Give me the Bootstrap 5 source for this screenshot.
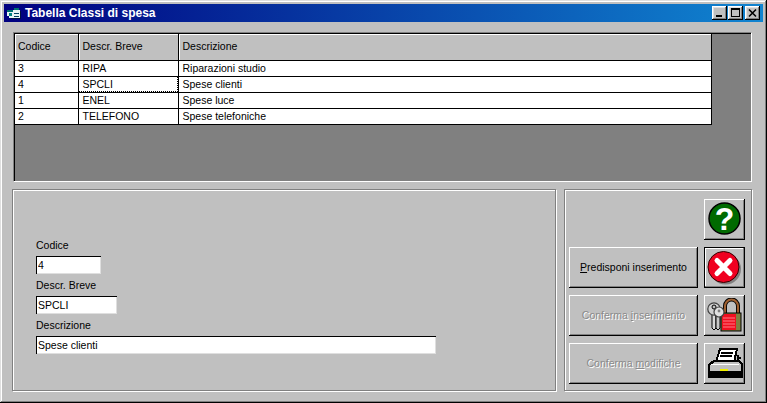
<!DOCTYPE html>
<html lang="it">
<head>
<meta charset="utf-8">
<title>Tabella Classi di spesa</title>
<link href="https://cdn.jsdelivr.net/npm/bootstrap@5.3.0/dist/css/bootstrap.min.css" rel="stylesheet">
<style>
html,body{margin:0;height:403px;overflow:hidden;background:#c0c0c0;}
body{font:10.5px/1.2 "Liberation Sans",Arial,sans-serif;color:#000;}
.win-frame{width:767px;height:403px;padding:4px;background:#c0c0c0;
 box-shadow:inset -1px -1px #000,inset 1px 1px #dfdfdf,inset -2px -2px #808080,inset 2px 2px #fff;}
.win-title{height:18px;padding:0 3px 0 2px;background:linear-gradient(90deg,#000080,#1084d0);color:#fff;}
.win-title-text{font:bold 12px "Liberation Sans",Arial,sans-serif;margin-left:3px;}
.win-ctl{width:15px;height:14px;padding:0;background:#c0c0c0;border:0;border-radius:0;display:block;
 box-shadow:inset -1px -1px #000,inset 1px 1px #fff,inset -2px -2px #808080,inset 2px 2px #dfdfdf;}
.win-ctl svg{display:block;}
.ctl-gap1{margin-left:1px;}
.ctl-gap2{margin-left:2px;}
.win-body{padding:10px 11px 0 8px;}
.grid-panel{height:150px;margin-left:1px;background:#808080;border:1px solid #808080;border-right-color:#fff;border-bottom-color:#fff;
 box-shadow:inset 1px 1px #000;padding:1px 0 0 1px;}
.data-table{width:696px;margin:0;table-layout:fixed;border-collapse:collapse;background:#fff;border-bottom:1px solid #000;--bs-table-bg:transparent;}
.data-table>:not(caption)>*>*{padding:0 0 0 4px;border:0;font-size:10.5px;line-height:15px;color:#000;box-shadow:none;white-space:nowrap;overflow:hidden;}
.data-table>:not(caption)>*>*:first-child{padding-left:3px;}
.data-table thead th{height:26px;background:#c0c0c0;font-weight:400;vertical-align:middle;border-right:1px solid #000;border-bottom:1px solid #000;box-shadow:inset 1px 1px #fff;}
.data-table tbody td{height:16px;border-right:1px solid #000;border-bottom:1px solid #000;}
.data-table tbody tr:last-child td{border-bottom:0;}
.cell-focus{outline:1px dotted #000;outline-offset:-1px;}
.bottom-row{height:202px;margin-top:7px;gap:8px;}
.etched{border:1px solid #808080;box-shadow:inset 1px 1px #fff,1px 1px #fff;background:#c0c0c0;}
.form-panel{width:544px;padding:48px 0 0 23px;}
.field{margin-bottom:4px;}
.field-label{display:block;height:18px;line-height:14px;margin:0;font-size:10.5px;}
.field-input{display:block;height:18px;padding:0 0 0 2px;font:10.5px/14px "Liberation Sans",Arial,sans-serif;color:#000;background:#fff;border:0;border-radius:0;
 box-shadow:inset 1px 1px #000,inset -1px -1px #dfdfdf;}
.w-code{width:65px;}.w-short{width:81px;}.w-desc{width:400px;}
.action-panel{width:188px;padding:9px 0 0 4px;}
.action-grid{display:grid;grid-template-columns:129px 41px;grid-auto-rows:41px;column-gap:6px;row-gap:7px;}
.bevel-btn{padding:0;border:0;border-radius:0;background:#c0c0c0;color:#000;font-size:10.5px;line-height:14px;
 box-shadow:inset -1px -1px #000,inset 1px 1px #fff,inset -2px -2px #808080;display:flex;align-items:center;justify-content:center;}
.bevel-btn span{padding-bottom:2px;}
.bevel-btn:disabled{opacity:1;background:#c0c0c0;color:#8a8a8a;text-shadow:1px 1px 0 #fff;border:0;}
.bevel-btn.is-default{box-shadow:inset 0 0 0 1px #000,inset -2px -2px #808080,inset 2px 2px #fff;}
.slot{grid-column:2;}
.bevel-btn u{text-underline-offset:1px;}
</style>
</head>
<body>
<div class="win-frame d-flex flex-column">
  <div class="win-title d-flex align-items-center flex-shrink-0">
    <svg width="16" height="14" viewBox="0 0 16 14" aria-hidden="true" shape-rendering="crispEdges">
      <path d="M1 4h7V2h5v2h1v8H3v-2H1z" fill="#e8f4f4"/>
      <path d="M1 4h6v2H1zM8 2h5v2H8z" fill="#006f70"/>
      <rect x="3" y="7" width="3" height="3" fill="#008080"/>
      <path d="M8 7h5v1H8zM8 10h5v1H8z" fill="#004060"/>
      <path d="M14 5h1v8H5v-1h9z" fill="#001040"/>
    </svg>
    <span class="win-title-text flex-grow-1">Tabella Classi di spesa</span>
    <button class="btn win-ctl" type="button" aria-label="Riduci a icona"><svg width="15" height="14" shape-rendering="crispEdges"><rect x="4" y="9" width="6" height="2" fill="#000"/></svg></button>
    <button class="btn win-ctl ctl-gap1" type="button" aria-label="Ingrandisci"><svg width="15" height="14" shape-rendering="crispEdges"><path d="M3 2h9v9H3z M4 4v6h7V4z" fill="#000" fill-rule="evenodd"/></svg></button>
    <button class="btn win-ctl ctl-gap2" type="button" aria-label="Chiudi"><svg width="15" height="14"><path d="M4 3.5l7 7M11 3.5l-7 7" stroke="#000" stroke-width="1.6"/></svg></button>
  </div>
  <div class="win-body flex-grow-1">
    <div class="grid-panel">
      <table class="table data-table">
        <colgroup><col style="width:63px"><col style="width:100px"><col style="width:533px"></colgroup>
        <thead><tr><th>Codice</th><th>Descr. Breve</th><th>Descrizione</th></tr></thead>
        <tbody>
          <tr><td>3</td><td>RIPA</td><td>Riparazioni studio</td></tr>
          <tr><td>4</td><td class="cell-focus">SPCLI</td><td>Spese clienti</td></tr>
          <tr><td>1</td><td>ENEL</td><td>Spese luce</td></tr>
          <tr><td>2</td><td>TELEFONO</td><td>Spese telefoniche</td></tr>
        </tbody>
      </table>
    </div>
    <div class="bottom-row d-flex">
      <div class="etched form-panel">
        <div class="field"><label class="field-label" for="f1">Codice</label><input id="f1" class="form-control field-input w-code" value="4"></div>
        <div class="field"><label class="field-label" for="f2">Descr. Breve</label><input id="f2" class="form-control field-input w-short" value="SPCLI"></div>
        <div class="field"><label class="field-label" for="f3">Descrizione</label><input id="f3" class="form-control field-input w-desc" value="Spese clienti"></div>
      </div>
      <div class="etched action-panel">
        <div class="action-grid">
          <button class="btn bevel-btn slot" type="button" aria-label="Aiuto">
            <svg width="36" height="36" viewBox="0 0 36 36"><circle cx="17.5" cy="16.5" r="15.5" fill="#006a00" stroke="#000" stroke-width="1.5"/><text x="17.5" y="28" text-anchor="middle" fill="#fff" font-family="Liberation Sans" font-weight="700" font-size="32">?</text></svg>
          </button>
          <button class="btn bevel-btn" type="button"><span><u>P</u>redisponi inserimento</span></button>
          <button class="btn bevel-btn is-default" type="button" aria-label="Esci">
            <svg width="36" height="36" viewBox="0 0 36 36"><circle cx="18.5" cy="19" r="15.5" fill="#808080"/><circle cx="16.5" cy="17" r="15.5" fill="#f00020" stroke="#300" stroke-width="1"/><path d="M10 10.5l13 13M23 10.5l-13 13" stroke="#fff" stroke-width="5" stroke-linecap="round"/></svg>
          </button>
          <button class="btn bevel-btn" type="button" disabled><span>Conferma <u>i</u>nserimento</span></button>
          <button class="btn bevel-btn" type="button" aria-label="Chiavi">
            <svg width="36" height="36" viewBox="0 0 36 36">
              <path d="M18 15V8a6.5 6.5 0 0 1 13 0v7" fill="none" stroke="#000" stroke-width="4"/>
              <path d="M18 15V8a6.5 6.5 0 0 1 13 0v7" fill="none" stroke="#a06030" stroke-width="2.2"/>
              <rect x="14" y="15" width="20" height="18" fill="#808040" stroke="#000" stroke-width="1"/>
              <rect x="15" y="16" width="14" height="16" fill="#f01020"/>
              <path d="M16 20h12M16 23h12M16 26h12M16 29h12" stroke="#ff8a94" stroke-width=".9"/>
              <path d="M5 17v13l2 2 2-2V17" fill="#d8d8d8" stroke="#000" stroke-width="1"/>
              <path d="M9 17v13l2 2 2-2V17" fill="#c8c8c8" stroke="#000" stroke-width="1"/>
              <circle cx="7" cy="11" r="6.2" fill="#d0d0d0" stroke="#404040" stroke-width="1.2"/>
              <circle cx="7" cy="9" r="2" fill="#c0c0c0" stroke="#000"/>
              <circle cx="12" cy="14" r="5" fill="#e0e0e0" stroke="#404040" stroke-width="1.2"/>
              <circle cx="12" cy="13" r="1.4" fill="#808080"/>
            </svg>
          </button>
          <button class="btn bevel-btn" type="button" disabled><span>Conferma <u>m</u>odifiche</span></button>
          <button class="btn bevel-btn" type="button" aria-label="Stampa">
            <svg width="36" height="36" viewBox="0 0 36 36" shape-rendering="crispEdges">
              <path d="M13 3h17l-3 13H9z" fill="#fff" stroke="#000" stroke-width="2"/>
              <path d="M14 7h12M13 10h12" stroke="#000" stroke-width="1.5"/>
              <path d="M7 15h25l3 3v13H2V19z" fill="#c0c0c0" stroke="#000" stroke-width="2.4"/>
              <rect x="3" y="25" width="31" height="5" fill="#000"/>
              <rect x="13" y="23" width="8" height="2" fill="#f0f000"/>
              <path d="M30 9h2v2h2v2h-2v2h-2z" fill="#000"/>
              <rect x="4" y="18" width="28" height="1" fill="#fff"/>
            </svg>
          </button>
        </div>
      </div>
    </div>
  </div>
</div>
<script src="https://cdn.jsdelivr.net/npm/bootstrap@5.3.0/dist/js/bootstrap.bundle.min.js"></script>
</body>
</html>
